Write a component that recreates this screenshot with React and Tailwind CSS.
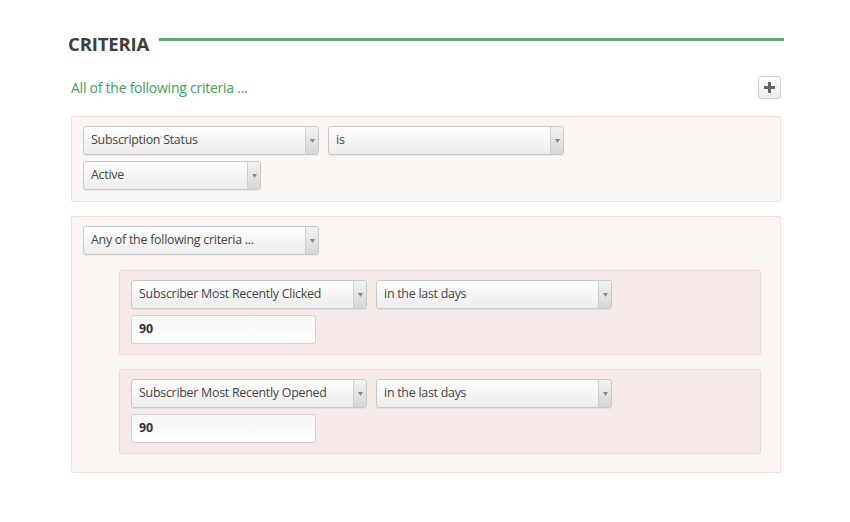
import React from 'react';

const Select = ({ value, width = 'w-[236px]' }) => (
  <div
    className={`${width} h-[29px] flex items-stretch rounded-[3px] border border-[#c9c9c9] bg-gradient-to-b from-white to-[#ececec] shadow-[0_1px_1px_rgba(0,0,0,0.06)]`}
  >
    <div className="flex-1 flex items-center pl-[7px] text-[12.4px] tracking-[-0.25px] text-[#444] truncate">{value}</div>
    <div className="w-[13px] flex items-center justify-center border-l border-[#cfcfcf] bg-gradient-to-b from-[#f2f2f2] to-[#d6d6d6] rounded-r-[3px]">
      <svg width="5" height="4" viewBox="0 0 5 4">
        <path d="M0 0h5L2.5 4z" fill="#888" />
      </svg>
    </div>
  </div>
);

const NumberInput = ({ value }) => (
  <div className="w-[185px] h-[29px] flex items-center pl-[7px] rounded-[3px] border border-[#d2d2d2] bg-gradient-to-b from-[#f6f6f6] to-white text-[12.4px] font-bold text-[#333]">
    {value}
  </div>
);

const SubRule = ({ field }) => (
  <div className="ml-[47px] mr-[19px] rounded-[2px] border border-[#f3d9d3] bg-[#f6eae8] pl-[11px] pt-[9px] pb-[10px]">
    <div className="flex gap-[9px]">
      <Select value={field} />
      <Select value="in the last days" />
    </div>
    <div className="mt-[6px]">
      <NumberInput value="90" />
    </div>
  </div>
);

export default function App() {
  return (
    <div
      className="w-[850px] h-[522px] bg-white pt-[30px] pl-[68px] pr-[66px]"
      style={{ fontFamily: '"Open Sans", "Noto Sans", sans-serif' }}
    >
      <div className="flex items-start">
        <h1 className="text-[18.6px] leading-[28px] font-bold text-[#3d3d3d] tracking-[-0.2px]">CRITERIA</h1>
        <div className="flex-1 h-[3px] mt-[8px] ml-[10px] bg-[#5ea674]" />
      </div>

      <div className="mx-[3px] mt-[18px] flex items-center justify-between">
        <span className="text-[14px] tracking-[-0.25px] text-[#41a05c]">All of the following criteria ...</span>
        <button className="w-[23px] h-[23px] flex items-center justify-center rounded-[3px] border border-[#d0d0d0] bg-gradient-to-b from-white to-[#ececec]">
          <svg width="11" height="11" viewBox="0 0 11 11">
            <path d="M4 0h3v4h4v3H7v4H4V7H0V4h4z" fill="#666" />
          </svg>
        </button>
      </div>

      <div className="mx-[3px] mt-[17px] rounded-[2px] border border-[#f6ddd7] bg-[#fbf5f3] pl-[11px] pt-[9px] pb-[11px]">
        <div className="flex gap-[9px]">
          <Select value="Subscription Status" />
          <Select value="is" />
        </div>
        <div className="mt-[6px]">
          <Select value="Active" width="w-[178px]" />
        </div>
      </div>

      <div className="mx-[3px] mt-[14px] rounded-[2px] border border-[#f6ddd7] bg-[#fbf5f3] pl-[11px] pt-[9px] pb-[18px]">
        <Select value="Any of the following criteria ..." />
        <div className="-ml-[11px] mt-[15px] flex flex-col gap-[14px]">
          <SubRule field="Subscriber Most Recently Clicked" />
          <SubRule field="Subscriber Most Recently Opened" />
        </div>
      </div>
    </div>
  );
}
